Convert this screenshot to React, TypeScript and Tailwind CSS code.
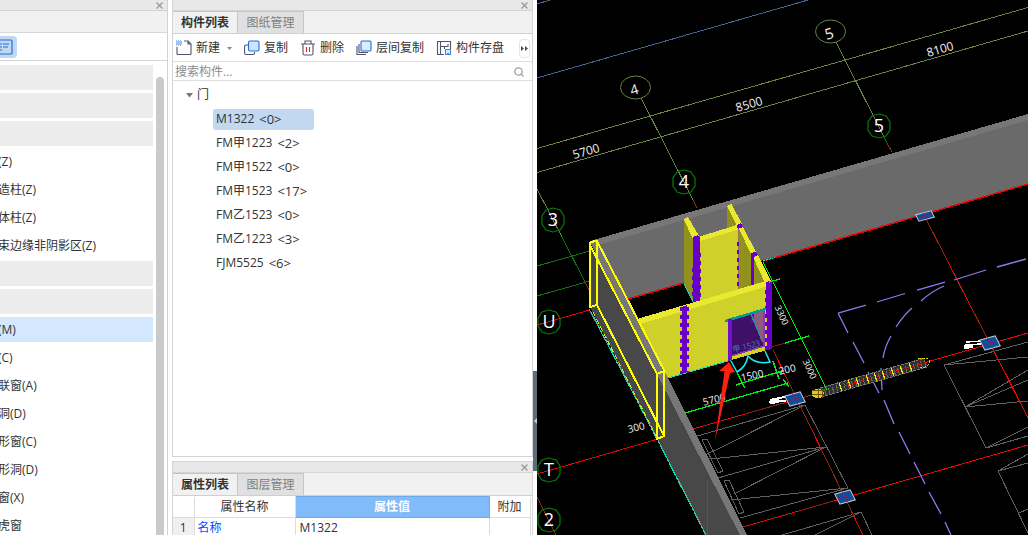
import type { ReactNode } from 'react';

type Row = { label?: string; selected?: boolean };

const categories: Row[] = [
  {},
  {},
  {},
  { label: '(Z)' },
  { label: '造柱(Z)' },
  { label: '体柱(Z)' },
  { label: '束边缘非阴影区(Z)' },
  {},
  {},
  { label: '(M)', selected: true },
  { label: '(C)' },
  { label: '联窗(A)' },
  { label: '洞(D)' },
  { label: '形窗(C)' },
  { label: '形洞(D)' },
  { label: '窗(X)' },
  { label: '虎窗' },
];

const doors = [
  { name: 'M1322', count: 0 },
  { name: 'FM甲1223', count: 2 },
  { name: 'FM甲1522', count: 0 },
  { name: 'FM甲1523', count: 17 },
  { name: 'FM乙1523', count: 0 },
  { name: 'FM乙1223', count: 3 },
  { name: 'FJM5525', count: 6 },
];

function PanelHeader() {
  return (
    <div className="flex h-[11px] shrink-0 items-center justify-end border-b border-[#d4d4d4] bg-[#e8e8e8] pr-1">
      <button aria-label="关闭" className="text-[#999]">
        <svg width="7" height="7" viewBox="0 0 7 7" stroke="currentColor" strokeWidth="1.3">
          <path d="M.5 .5l6 6M6.5 .5l-6 6" />
        </svg>
      </button>
    </div>
  );
}

function Tabs({ items }: { items: string[] }) {
  return (
    <div className="flex h-[23px] shrink-0 border-b border-[#d0d0d3] bg-[#f1f1f1]">
      {items.map((item, i) => (
        <button
          key={item}
          className={
            i === 0
              ? 'w-[65px] border-r border-t border-[#c4c6cb] bg-[#f1f1f1] font-bold text-[#333]'
              : 'w-[66px] border-r border-t border-[#c4c6cb] bg-[#e0e0e0] text-[#808080]'
          }
        >
          {item}
        </button>
      ))}
    </div>
  );
}

function Tool({ label, children }: { label: string; children: ReactNode }) {
  return (
    <button className="flex shrink-0 items-center gap-1 whitespace-nowrap">
      <svg width="16" height="16" viewBox="0 0 16 16" fill="none" stroke="#50566b" strokeWidth="1.1">
        {children}
      </svg>
      {label}
    </button>
  );
}

function CategoryPanel() {
  return (
    <aside className="flex w-[168px] shrink-0 flex-col overflow-hidden border-r border-[#d2d2d2]">
      <PanelHeader />
      <div className="h-[22px] shrink-0 border-b border-[#d8d8d8] bg-[#f1f1f1]" />
      <div className="flex h-7 shrink-0 items-center border-b border-[#d4d4d4]">
        <button aria-label="列表视图" className="flex h-[22px] w-[17px] items-center justify-end rounded-r bg-[#c1d8f0] pr-1">
          <svg width="13" height="16" viewBox="0 0 13 16" fill="none" stroke="#1d6fe0" strokeWidth="1.2">
            <path d="M0 1h11q1 0 1 1v12q0 1-1 1H0M0 5h2M3 5h6M0 8h2M3 8h5M0 11h2" />
          </svg>
        </button>
      </div>
      <div className="flex min-h-0 flex-1 justify-between pr-[3px]">
        <ul className="flex w-[153px] flex-col gap-[3px] pt-1">
          {categories.map((row, i) => (
            <li
              key={i}
              className={
                row.selected
                  ? 'h-[25px] shrink-0 bg-[#d3e7ff] leading-[25px]'
                  : row.label
                    ? 'h-[25px] shrink-0 leading-[25px]'
                    : 'h-[25px] shrink-0 bg-[#ececec]'
              }
            >
              <span className="-ml-0.5 whitespace-nowrap">{row.label}</span>
            </li>
          ))}
        </ul>
        <div className="mt-4 w-2 rounded-t-full bg-[#cacaca]" />
      </div>
    </aside>
  );
}

function ComponentPanel() {
  return (
    <section className="flex min-h-0 flex-1 flex-col border border-t-0 border-[#d4d4d4]">
      <PanelHeader />
      <Tabs items={['构件列表', '图纸管理']} />
      <div className="flex h-7 shrink-0 items-center gap-3 border-b border-[#dedede] pl-[3px] pr-0.5 pt-px">
        <div className="flex w-14 shrink-0 items-center justify-between">
          <Tool label="新建">
            <path d="M8 1h4l3 3v9.500q0 1-1 1H2q-1 0-1-1V7M12 1v3h3" />
            <path d="M0 1h5M0 3h5M0 5h5" stroke="#3f88e8" strokeDasharray="1 1" />
            <path d="M1 2h5M1 4h5" stroke="#3f88e8" strokeDasharray="1 1" />
          </Tool>
          <svg width="5" height="3" viewBox="0 0 5 3">
            <path d="M0 0h5L2.500 3z" fill="#888" />
          </svg>
        </div>
        <Tool label="复制">
          <path d="M4 5H2Q.6 5 .6 6.500V13q0 1.500 1.500 1.500H9q1.500 0 1.500-1.500v-1" />
          <rect x="4.500" y="1" width="10.500" height="10" rx="1.500" fill="#cfe3fc" stroke="#1d6fe0" />
        </Tool>
        <Tool label="删除">
          <path d="M1 4h14M5 4V1h6v3M3 4v9.500q0 1.500 1.500 1.500h7q1.500 0 1.500-1.500V4" />
          <path d="M6.500 7v5M9.500 7v5" stroke="#e02030" />
        </Tool>
        <Tool label="层间复制">
          <path d="M3 4v8.500h9M1 6v8.500h9" />
          <rect x="5" y="1" width="10" height="10" rx="1" fill="#dcecff" stroke="#1d6fe0" />
        </Tool>
        <Tool label="构件存盘">
          <path d="M8 14.500H1.500V1.500h13V9M4.500 2v12.500M5 6.500h7V4M8.500 7v2" />
          <path d="M9.500 9.500h5v5h-5z" stroke="#3f88e8" fill="#dcecff" />
          <path d="M11 13h2v2h-2z" fill="#3f88e8" stroke="none" />
        </Tool>
        <button
          aria-label="更多"
          className="ml-auto flex h-[19px] w-[11px] shrink-0 items-center justify-center rounded border border-[#e4e4e4]"
        >
          <svg width="7" height="5" viewBox="0 0 7 5" fill="#444a5c">
            <path d="M0 0l3 2.500L0 5zM4 0l3 2.500L4 5z" />
          </svg>
        </button>
      </div>
      <div className="flex h-[19px] shrink-0 items-center justify-between border-b border-[#dedede] pl-0.5 pr-2 pt-px">
        <input
          aria-label="搜索构件"
          placeholder="搜索构件..."
          className="min-w-0 flex-1 bg-transparent leading-4 outline-none placeholder:text-[#8c8c8c]"
        />
        <svg width="10" height="10" viewBox="0 0 10 10" fill="none" stroke="#a0a0a0" strokeWidth="1.300">
          <circle cx="4.500" cy="4.500" r="3.700" />
          <path d="M7 7l2.500 2.500" />
        </svg>
      </div>
      <div className="pt-0.5">
        <button className="flex h-6 items-center gap-1 pl-[13px]">
          <svg width="7" height="5" viewBox="0 0 7 5">
            <path d="M0 0h7L3.500 4.500z" fill="#777" />
          </svg>
          门
        </button>
        <ul className="pl-10">
          {doors.map((door, i) => (
            <li key={door.name} className="flex h-6 items-center">
              <button
                className={
                  i === 0
                    ? 'flex h-[21px] w-[101px] items-center gap-[5px] rounded-[3px] bg-[#c1d8f0] pl-[3px]'
                    : 'flex h-[21px] items-center gap-[5px] pl-[3px]'
                }
              >
                <span>{door.name}</span>
                <span className="text-[13px]">{`<${door.count}>`}</span>
              </button>
            </li>
          ))}
        </ul>
      </div>
    </section>
  );
}

function PropertyPanel() {
  return (
    <section className="h-[74px] shrink-0 overflow-hidden border-x border-t border-[#d4d4d4]">
      <PanelHeader />
      <Tabs items={['属性列表', '图层管理']} />
      <table className="w-[357px] table-fixed border-collapse">
        <colgroup>
          <col className="w-[21px]" />
          <col className="w-[101px]" />
          <col className="w-[194px]" />
          <col className="w-[41px]" />
        </colgroup>
        <thead>
          <tr className="h-[21px]">
            <th className="border-b border-r border-[#dcdcdc]" />
            <th className="border-b border-r border-[#dcdcdc] font-normal">属性名称</th>
            <th className="border border-[#6faae8] bg-[#82bbfa] font-bold text-white">属性值</th>
            <th className="border-b border-r border-[#dcdcdc] font-normal">附加</th>
          </tr>
        </thead>
        <tbody>
          <tr className="h-[21px]">
            <td className="border-r border-[#dcdcdc] bg-[#f0f0f0] text-center">1</td>
            <td className="border-r border-[#dcdcdc] pl-[3px] text-[#0a4dff]">名称</td>
            <td className="border-r border-[#dcdcdc] pl-1">M1322</td>
            <td className="border-r border-[#dcdcdc]" />
          </tr>
        </tbody>
      </table>
    </section>
  );
}

const axisMarks = [
  { t: '4', x: 684, y: 182 },
  { t: '5', x: 879, y: 126 },
  { t: '3', x: 553, y: 220 },
  { t: 'U', x: 549, y: 322 },
  { t: 'T', x: 549, y: 470 },
  { t: '2', x: 549, y: 520 },
];

const dimensions = [
  { t: '8500', x: 749, y: 104, r: -16, s: 12 },
  { t: '5700', x: 586, y: 151, r: -16, s: 12 },
  { t: '8100', x: 940, y: 49, r: -16, s: 12 },
  { t: '4', x: 634, y: 89, r: -16, s: 14 },
  { t: '5', x: 829, y: 33, r: -16, s: 15 },
  { t: '300', x: 636, y: 427, r: -14, s: 10 },
  { t: '1500', x: 752, y: 375, r: -12, s: 10 },
  { t: '200', x: 787, y: 369, r: -12, s: 10 },
  { t: '5700', x: 714, y: 399, r: -14, s: 10 },
  { t: '3300', x: 782, y: 315, r: 66, s: 9 },
  { t: '3000', x: 810, y: 369, r: 66, s: 9 },
];

const columns = [
  { x: 795, y: 399, h: 11 },
  { x: 845, y: 497, h: 11 },
  { x: 990, y: 343, h: 11 },
  { x: 925, y: 216, h: 7 },
];

function ModelView() {
  return (
    <svg
      className="block h-full w-full"
      viewBox="537 0 491 535"
      preserveAspectRatio="xMinYMin slice"
      fontFamily="'Open Sans', 'Noto Sans CJK SC', sans-serif"
      fill="none"
      shapeRendering="crispEdges"
    >
      {/* grid and dimension lines */}
      <path d="M537 78L808 0M537 4L550 0" stroke="#41658f" />
      <path
        d="M537 148.500L1028 7.500M537 172.500L1028 31M641 98L693 200M836 42L884 137M537 189L562 237"
        stroke="#668442"
      />
      <g stroke="#668442" shapeRendering="auto">
        <ellipse cx="635.500" cy="87.500" rx="15" ry="11.500" />
        <ellipse cx="830.500" cy="31.500" rx="15" ry="11.500" />
      </g>
      <path d="M562 237L585 282M537 266L590 251M537 296L590 281M884 137L888 145" stroke="#0d760d" />
      <path d="M585 282L591 294M693 200L697 208M888 145L892 152M537 497L556 535" stroke="#93300c" />
      <path d="M537 325L590 310M537 474L658 439" stroke="#dc0808" />

      {/* parking bays */}
      <path
        d="M694 437L805 405L848 488L740 518M805 405L720 448L707 454M826 447L720 458L707 459M826 447L734 494M826 447L718 478M848 488L731 500M782 535L861 512L872 535M861 512L815 535M702 440L707 439L723 471L718 473zM724 481L729 480L744 512L739 514z"
        stroke="#606060"
      />
      <path
        d="M1028 342L944 365L1028 357M944 365L986 448L1028 427M986 448L1028 436M965 407L1028 380M965 407L1028 401M1028 454L998 471L1028 463M998 471L1028 533M1019 513L1028 509M965 407L1028 370"
        stroke="#606060"
      />

      {/* axes */}
      <path d="M693 429L1028 333M743 527L1028 445" stroke="#e80808" />
      <path d="M745 414L780 404M802 510L830 502" stroke="#7a210b" />
      <path d="M773 350L863 535M925 217L1028 418" stroke="#8b280c" />
      <path
        d="M775 354L785 375M812 430L822 451M854 517L863 535M948 262L973 311M990 343L1028 418"
        stroke="#e80808"
      />
      <path
        d="M838 313L866 305M877 302L905 293.500M917 290L945 282M954 280L986 270M997 267L1026 259M838 313L848 333M853 342L864 363M868 372L879 393M884 400L894 424M899 432L910 454M914 462L925 484M929 492L941 514M945 522L951 535M944 286Q932 291 921 301M912 308Q903 316 896 327M891 336Q885 346 883 358M881 368L882 390"
        stroke="#9277ee"
        strokeWidth="1.300"
        shapeRendering="auto"
      />

      {/* back wall */}
      <path d="M590 241L1028 114V184L628 299z" fill="#6a6a6a" />
      <path d="M590 241L1028 114V120L598 245z" fill="#777" />
      <path d="M628 299L684 283M763 261L1028 184" stroke="#f00505" strokeWidth="1.500" />
      <path d="M763 261L775 257.500" stroke="#20d8b0" strokeDasharray="2 1" />

      {/* cladding rail */}
      <path d="M819 393L926 362.500" stroke="#303030" strokeWidth="10" />
      <path d="M820 388L925 358M821 397L927 367" stroke="#777" strokeDasharray="3 1" />
      <path d="M821 393L926 363" stroke="#666" strokeWidth="6" strokeDasharray="1 3" />
      <path d="M837 388L926 362.500" stroke="#e80808" strokeDasharray="4 2" />
      <path
        d="M839 383l3 8M848 380l3 8M856 378l3 8M866 375l3 8M874 373l3 8M882 371l3 8M891 368l3 8M900 366l3 8M909 363l3 8"
        stroke="#f5ec00"
        strokeWidth="1.200"
      />
      <path d="M918 359L927 358Q933 363 925 367L920 368" stroke="#d8d000" strokeDasharray="3 1" />
      <ellipse cx="818" cy="393.500" rx="6" ry="5" fill="#e6c810" />
      <path d="M812 391l12-1M812 395l12-1M818 389v9M822 389v9" stroke="#705800" />

      {/* structural columns */}
      <path d="M770 400L787 396.500M769 402L786 401" stroke="#fff" strokeWidth="2" />
      <path d="M770 402L779 401M964 347L973 346" stroke="#fff" strokeWidth="4" />
      <path d="M966 342L982 341M965 345L981 344" stroke="#fff" strokeWidth="1.500" />
      {columns.map((c) => (
        <g key={c.x} transform={`translate(${c.x} ${c.y}) rotate(-15) skewX(12)`} shapeRendering="auto">
          <rect x="-8" y={-c.h / 2} width="16" height={c.h} fill="#0750a0" stroke="#c9c9c9" />
          <path d={`M-7 0H7M0 ${-c.h / 2}V${c.h / 2}`} stroke="#822060" />
        </g>
      ))}

      {/* rear rooms */}
      <path d="M683.500 219L693 238V302L683.500 284zM727 206L739 229V250L727 230zM739 229L752 254V286L739 290zM754 258L767 283L754 286z" fill="#90901c" />
      <path d="M699 238L738 227V290L699 302z" fill="#d0d02a" />
      <path d="M698 237L737 225L740 229L700 241zM683.500 219L688 217L699 236L693 239zM727 206L731.500 204L742 224L737 226zM739 229L743 227L756 252L751 254zM753 257L758 255L771 281L765 283z" fill="#e9e92f" />
      <path d="M693 237L698 235L700 238V302H693zM736.500 225L741 223L743 227L738 229zM750.500 253L756 252L758 255L752 258zM751 255H754V286H751z" fill="#6800c8" />
      <path d="M738 229V290" stroke="#9a7450" />
      <path d="M738 242V290" stroke="#6800c8" strokeWidth="2.500" strokeDasharray="4 4" />
      <path d="M692.500 268V302M700.500 253V302" stroke="#6800c8" strokeWidth="1.500" strokeDasharray="4 4" />
      <path d="M684 284L693 302" stroke="#20d8b0" strokeWidth="1.300" />

      {/* front room */}
      <path d="M638 320L767 283V350L664 379z" fill="#d0d02a" />
      <path d="M637 319L766 281L768 286L640 324z" fill="#e9e92f" />
      <path d="M668 378L731 360" stroke="#20d8b0" />
      <path d="M681.500 307L687 305V372L682 374z" fill="#6800c8" />
      <path d="M681 307V374M688 307V373" stroke="#6800c8" strokeWidth="2" strokeDasharray="4 4" />
      <path d="M766 282L772 280V349L767 350z" fill="#6800c8" />
      <path d="M766 290V350" stroke="#6800c8" strokeWidth="2" strokeDasharray="4 4" />

      {/* selected door */}
      <path d="M731 320L765 310V346L731 355z" fill="#3e1068" />
      <path d="M751 314L764 310V344L761 340z" fill="#905c7c" />
      <path d="M751 314V322L754 323V313z" fill="#6800c8" />
      <path d="M751 314L762 340" stroke="#2b8ba0" strokeWidth="1.500" />
      <path d="M725 321L766 309" stroke="#059a98" strokeWidth="2.500" />
      <path d="M731 356L764 346V311" stroke="#8a35c0" strokeWidth="1.500" />
      <path d="M728 319H731.500V360L728 361z" fill="#7010c8" />
      <text x="747" y="349" fontSize="8" textAnchor="middle" fill="#4878c0" transform="rotate(-14 747 349)">
        甲 1523
      </text>
      <path
        d="M731 361L737 372Q746 367 748 356Q756 365 770 362L765 351"
        stroke="#20e8f0"
        strokeWidth="1.500"
        shapeRendering="auto"
      />

      {/* curtain wall frame */}
      <path d="M590 245L657 374V439L590 307z" fill="#484848" />
      <path d="M664 376L740 535H706L657 439V376z" fill="#484848" />
      <path d="M707 480V535" stroke="#555" />
      <path d="M590 242L597 240L665 372L747 535H740L657 374z" fill="#777" />
      <path d="M589 309L658 440L706 535" stroke="#888" />
      <path d="M591 312L658 441L706 535" stroke="#18dcb0" strokeWidth="1.300" strokeDasharray="4 1" />
      <path
        d="M590 242V307L597 305V241L590 242M597 241L665 372M590 245L657 374V439L664 436V371L657 374M597 305L664 436"
        stroke="#ffff00"
        strokeWidth="2"
      />
      <path d="M593 312L657 438" stroke="#d7ee00" strokeDasharray="5 3" />

      {/* running dimensions */}
      <path
        d="M763 262L827 390M769 282L780 279M785 343L809 336M739 384L782 371M737 373L745 388M736 385l6-2M773 361L779 379M776 373l8-2M685 413L788 383M783 379l6 8"
        stroke="#00f010"
        strokeWidth="1.300"
      />
      <path d="M772 347L785 343" stroke="#7a210b" />

      {axisMarks.map((m) => (
        <g key={m.t}>
          <path
            d="M0 -12L7 -10L11 -4V4L7 10L0 12L-7 10L-11 4V-4L-7 -10z"
            stroke="#087c08"
            strokeWidth="1.200"
            shapeRendering="auto"
            transform={`translate(${m.x} ${m.y})`}
          />
          <text x={m.x} y={m.y + 6} fontSize="18" textAnchor="middle" fill="#fff">
            {m.t}
          </text>
        </g>
      ))}
      {dimensions.map((d) => (
        <text
          key={`${d.x}-${d.y}`}
          x={d.x}
          y={d.y}
          fontSize={d.s}
          textAnchor="middle"
          dominantBaseline="central"
          fill="#f4f4f4"
          transform={`rotate(${d.r} ${d.x} ${d.y})`}
        >
          {d.t}
        </text>
      ))}

      <path d="M729 362L719 371L724.500 371L715 441L730 373L735 372z" fill="#ff2010" shapeRendering="auto" />
    </svg>
  );
}

export default function App() {
  return (
    <div className="flex h-screen overflow-hidden bg-white font-['Open_Sans','Noto_Sans_CJK_SC',sans-serif] text-[12px] leading-4 text-[#333]">
      <CategoryPanel />
      <div className="ml-1 flex w-[361px] shrink-0 flex-col gap-1">
        <ComponentPanel />
        <PropertyPanel />
      </div>
      <div className="flex w-1 shrink-0 flex-col justify-end pb-16">
        <button aria-label="折叠面板" className="flex h-[100px] items-center justify-center bg-[#5f6b77]">
          <svg width="3" height="6" viewBox="0 0 3 6">
            <path d="M3 0v6L0 3z" fill="#ccc" />
          </svg>
        </button>
      </div>
      <main className="min-w-0 flex-1 bg-black">
        <ModelView />
      </main>
    </div>
  );
}
